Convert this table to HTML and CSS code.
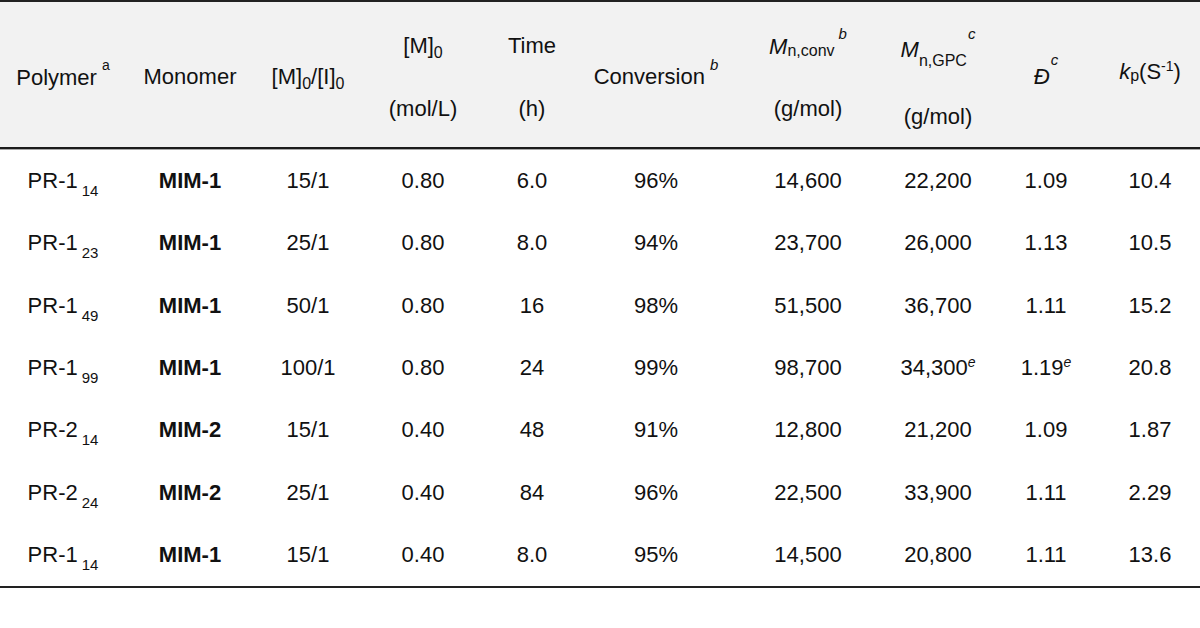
FILE: index.html
```html
<!DOCTYPE html>
<html>
<head>
<meta charset="utf-8">
<link rel="stylesheet" href="styles.css">
</head>
<body>
<div class="tbl">
  <div class="grid head">
    <div class="hc one"><div class="ln">Polymer<span class="sup-a">a</span></div></div>
    <div class="hc one"><div class="ln">Monomer</div></div>
    <div class="hc one"><div class="ln">[M]<span class="sub0">0</span>/[I]<span class="sub0">0</span></div></div>
    <div class="hc two"><div class="ln">[M]<span class="sub0">0</span></div><div class="ln l2">(mol/L)</div></div>
    <div class="hc two"><div class="ln">Time</div><div class="ln l2">(h)</div></div>
    <div class="hc one"><div class="ln">Conversion<span class="sup-b">b</span></div></div>
    <div class="hc two"><div class="ln"><i>M</i><span class="sub-conv">n,conv</span><span class="sup-mb">b</span></div><div class="ln l2">(g/mol)</div></div>
    <div class="hc two"><div class="ln"><i>M</i><span class="sub-gpc">n,GPC</span><span class="sup-mc">c</span></div><div class="ln l2b">(g/mol)</div></div>
    <div class="hc one up"><div class="ln"><i>Đ</i><span class="sup-dc">c</span></div></div>
    <div class="hc one up"><div class="ln"><i>k</i><span class="sub-p">p</span>(S<span class="sup-m1">-1</span>)</div></div>
  </div>
  <div class="body">
    <div class="grid row"><div>PR-1<span class="sub-n">14</span></div><div class="b">MIM-1</div><div>15/1</div><div>0.80</div><div>6.0</div><div>96%</div><div>14,600</div><div>22,200</div><div>1.09</div><div>10.4</div></div>
    <div class="grid row"><div>PR-1<span class="sub-n">23</span></div><div class="b">MIM-1</div><div>25/1</div><div>0.80</div><div>8.0</div><div>94%</div><div>23,700</div><div>26,000</div><div>1.13</div><div>10.5</div></div>
    <div class="grid row"><div>PR-1<span class="sub-n">49</span></div><div class="b">MIM-1</div><div>50/1</div><div>0.80</div><div>16</div><div>98%</div><div>51,500</div><div>36,700</div><div>1.11</div><div>15.2</div></div>
    <div class="grid row"><div>PR-1<span class="sub-n">99</span></div><div class="b">MIM-1</div><div>100/1</div><div>0.80</div><div>24</div><div>99%</div><div>98,700</div><div>34,300<span class="sup-e">e</span></div><div>1.19<span class="sup-e">e</span></div><div>20.8</div></div>
    <div class="grid row"><div>PR-2<span class="sub-n">14</span></div><div class="b">MIM-2</div><div>15/1</div><div>0.40</div><div>48</div><div>91%</div><div>12,800</div><div>21,200</div><div>1.09</div><div>1.87</div></div>
    <div class="grid row"><div>PR-2<span class="sub-n">24</span></div><div class="b">MIM-2</div><div>25/1</div><div>0.40</div><div>84</div><div>96%</div><div>22,500</div><div>33,900</div><div>1.11</div><div>2.29</div></div>
    <div class="grid row"><div>PR-1<span class="sub-n">14</span></div><div class="b">MIM-1</div><div>15/1</div><div>0.40</div><div>8.0</div><div>95%</div><div>14,500</div><div>20,800</div><div>1.11</div><div>13.6</div></div>
  </div>
</div>
</body>
</html>
```
FILE: styles.css
```css
html, body {
  margin: 0;
  padding: 0;
  background: #ffffff;
}
body {
  font-family: "Liberation Sans", Arial, sans-serif;
  font-size: 22px;
  color: #111111;
}
.tbl {
  width: 1200px;
}
.grid {
  display: grid;
  grid-template-columns: 126px 128px 108px 122px 96px 152px 152px 108px 108px 100px;
}
.head {
  height: 145px;
  background: #f2f2f2;
  border-top: 2px solid #222;
  border-bottom: 2px solid #1c1c1c;
  box-shadow: 0 1px 0 #a8a8a8;
}
.hc {
  display: flex;
  flex-direction: column;
  align-items: center;
  white-space: nowrap;
}
.ln {
  line-height: 24px;
  height: 24px;
}
.one { padding-top: 63px; }
.one.up { padding-top: 58px; }
.two { padding-top: 32px; }
.l2 { margin-top: 39px; }
.l2b { margin-top: 47px; }

.body {
  margin-top: 1px;
  border-bottom: 2px solid #222;
}
.row {
  height: 62.3px;
  align-items: center;
}
.row > div {
  text-align: center;
  line-height: 24px;
  white-space: nowrap;
}
.b { font-weight: bold; }

.sub-n {
  font-size: 15px;
  vertical-align: -8px;
  line-height: 0;
  margin-left: 4px;
}
.sub0 {
  font-size: 16px;
  vertical-align: -5px;
  line-height: 0;
}
.sup-a {
  font-size: 14px;
  vertical-align: 15px;
  line-height: 0;
  margin-left: 5px;
}
.sup-b {
  font-size: 15px;
  font-style: italic;
  vertical-align: 14px;
  line-height: 0;
  margin-left: 5px;
}
.sub-conv {
  font-size: 16px;
  vertical-align: -2px;
  line-height: 0;
}
.sup-mb {
  font-size: 15px;
  font-style: italic;
  vertical-align: 15px;
  line-height: 0;
  margin-left: 4px;
}
.sub-gpc {
  font-size: 16px;
  vertical-align: -9px;
  line-height: 0;
}
.sup-mc {
  font-size: 15px;
  font-style: italic;
  vertical-align: 18px;
  line-height: 0;
  margin-left: 1px;
}
.sup-dc {
  font-size: 15px;
  font-style: italic;
  vertical-align: 19px;
  line-height: 0;
  margin-left: 1px;
}
.sub-p {
  font-size: 16px;
  vertical-align: -2px;
  line-height: 0;
}
.sup-m1 {
  font-size: 14px;
  vertical-align: 8px;
  line-height: 0;
}
.sup-e {
  font-size: 14px;
  font-style: italic;
  vertical-align: 8px;
  line-height: 0;
}
```
